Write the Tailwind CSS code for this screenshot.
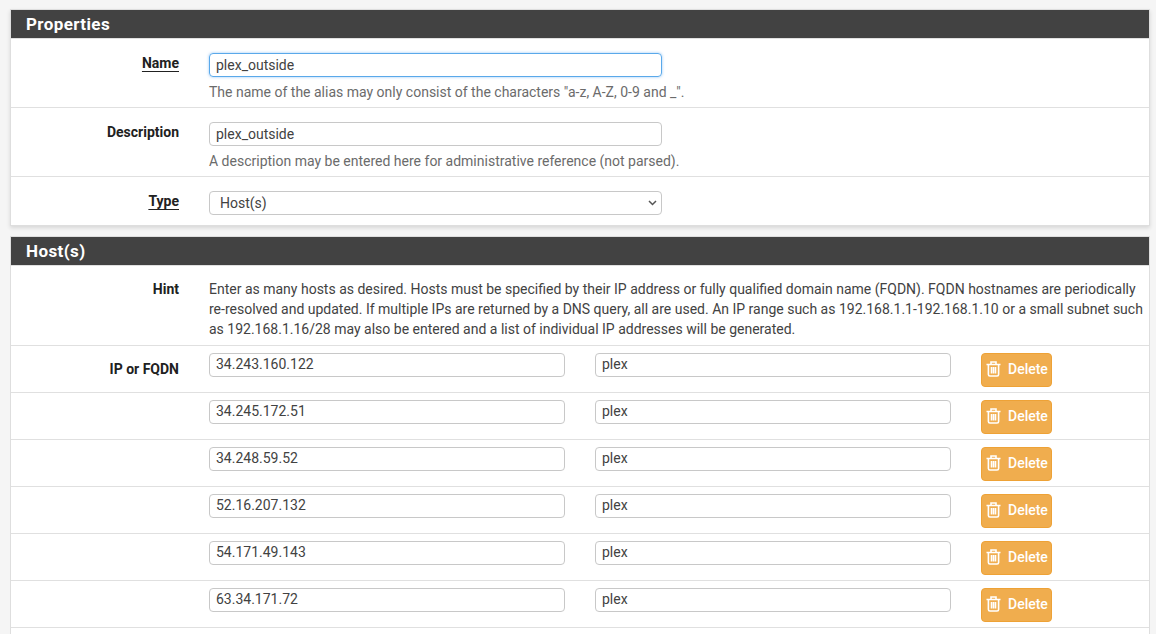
<!DOCTYPE html>
<html>
<head>
<meta charset="utf-8">
<script src="https://cdn.jsdelivr.net/npm/@tailwindcss/browser@4"></script>
</head>
<body class="bg-[#f5f5f5] font-['Roboto',sans-serif] text-[14px] text-[#424242] overflow-hidden">
<div class="h-[634px] overflow-hidden pt-[9px] pl-[10px] pr-[6px]">
  <section class="bg-white border border-[#dedede] shadow-[0_2px_4px_rgba(0,0,0,0.12)] mb-[10px]">
    <h2 class="h-[29px] bg-[#424242] border-b border-[#e0e0e0] text-white font-bold text-[17px] leading-[29px] pl-[15px] tracking-[0.4px]">Properties</h2>
    <div class="h-[69px] flex border-b border-[#e0e0e0] pt-[14px]">
      <div class="w-[168px] text-right font-bold text-[#212121] leading-[20px]"><span class="underline underline-offset-[3px]">Name</span></div>
      <div class="ml-[30px] w-[453px]">
        <input class="block w-full h-[24px] rounded-[4px] border border-[#5aa9ea] shadow-[0_0_3px_rgba(80,160,240,0.6)] px-[6px] text-[14px] text-[#424242] outline-none" value="plex_outside">
        <p class="mt-[5px] leading-[20px] text-[#6b6b6b] whitespace-nowrap">The name of the alias may only consist of the characters "a-z, A-Z, 0-9 and _".</p>
      </div>
    </div>
    <div class="h-[69px] flex border-b border-[#e0e0e0] pt-[14px]">
      <div class="w-[168px] text-right font-bold text-[#212121] leading-[20px]">Description</div>
      <div class="ml-[30px] w-[453px]">
        <input class="block w-full h-[24px] rounded-[4px] border border-[#c8c8c8] px-[6px] text-[14px] text-[#424242] outline-none" value="plex_outside">
        <p class="mt-[5px] leading-[20px] text-[#6b6b6b] whitespace-nowrap">A description may be entered here for administrative reference (not parsed).</p>
      </div>
    </div>
    <div class="h-[48px] flex pt-[14px]">
      <div class="w-[168px] text-right font-bold text-[#212121] leading-[20px]"><span class="underline underline-offset-[3px]">Type</span></div>
      <div class="ml-[30px] w-[453px] h-[24px] rounded-[4px] border border-[#c8c8c8] flex items-center justify-between pl-[10px] pr-[3px]">
        <span>Host(s)</span>
        <svg class="mr-[1px]" width="9" height="6" viewBox="0 0 9 6" fill="none" stroke="#555" stroke-width="1.5"><path d="M1 1 L4.5 4.5 L8 1"/></svg>
      </div>
    </div>
  </section>
  <section class="bg-white border border-[#dedede]">
    <h2 class="h-[29px] bg-[#424242] border-b border-[#e0e0e0] text-white font-bold text-[17px] leading-[28px] pl-[15px] tracking-[0.4px]">Host(s)</h2>
    <div class="h-[80px] flex border-b border-[#e0e0e0] pt-[11px]">
      <div class="w-[168px] text-right font-bold text-[#212121] leading-[24px]">Hint</div>
      <p class="ml-[30px] w-[936px] leading-[20px] pt-[2px] text-[#424242]">Enter as many hosts as desired. Hosts must be specified by their IP address or fully qualified domain name (FQDN). FQDN hostnames are periodically re-resolved and updated. If multiple IPs are returned by a DNS query, all are used. An IP range such as 192.168.1.1-192.168.1.10 or a small subnet such as 192.168.1.16/28 may also be entered and a list of individual IP addresses will be generated.</p>
    </div>

    <div class="h-[47px] flex border-b border-[#e0e0e0] pt-[7px]">
      <div class="w-[168px] text-right font-bold text-[#212121] leading-[20px] pt-[6px]">IP or FQDN</div>
      <input class="ml-[30px] w-[356px] h-[24px] rounded-[4px] border border-[#c8c8c8] px-[6px] pb-[2px] text-[14px] text-[#424242] outline-none" value="34.243.160.122">
      <input class="ml-[30px] w-[356px] h-[24px] rounded-[4px] border border-[#c8c8c8] px-[6px] pb-[2px] text-[14px] text-[#424242] outline-none" value="plex">
      <button class="ml-[30px] w-[71px] h-[34px] rounded-[4px] bg-[#f0ad4e] border border-[#eea236] text-white font-medium flex items-center pl-[4px] pb-[2px] gap-[7px]"><svg width="15" height="16" viewBox="0 0 15 16" fill="none" stroke="#fff" stroke-width="1.6"><path d="M0.5 3.5H14.5M5 3.2V1H10V3.2M2.4 3.5V13.5a1.5 1.5 0 0 0 1.5 1.5H11.1A1.5 1.5 0 0 0 12.6 13.5V3.5M5.5 6V12.6M7.5 6V12.6M9.5 6V12.6"/></svg>Delete</button>
    </div>
    <div class="h-[47px] flex border-b border-[#e0e0e0] pt-[7px]">
      <div class="w-[168px]"></div>
      <input class="ml-[30px] w-[356px] h-[24px] rounded-[4px] border border-[#c8c8c8] px-[6px] pb-[2px] text-[14px] text-[#424242] outline-none" value="34.245.172.51">
      <input class="ml-[30px] w-[356px] h-[24px] rounded-[4px] border border-[#c8c8c8] px-[6px] pb-[2px] text-[14px] text-[#424242] outline-none" value="plex">
      <button class="ml-[30px] w-[71px] h-[34px] rounded-[4px] bg-[#f0ad4e] border border-[#eea236] text-white font-medium flex items-center pl-[4px] pb-[2px] gap-[7px]"><svg width="15" height="16" viewBox="0 0 15 16" fill="none" stroke="#fff" stroke-width="1.6"><path d="M0.5 3.5H14.5M5 3.2V1H10V3.2M2.4 3.5V13.5a1.5 1.5 0 0 0 1.5 1.5H11.1A1.5 1.5 0 0 0 12.6 13.5V3.5M5.5 6V12.6M7.5 6V12.6M9.5 6V12.6"/></svg>Delete</button>
    </div>
    <div class="h-[47px] flex border-b border-[#e0e0e0] pt-[7px]">
      <div class="w-[168px]"></div>
      <input class="ml-[30px] w-[356px] h-[24px] rounded-[4px] border border-[#c8c8c8] px-[6px] pb-[2px] text-[14px] text-[#424242] outline-none" value="34.248.59.52">
      <input class="ml-[30px] w-[356px] h-[24px] rounded-[4px] border border-[#c8c8c8] px-[6px] pb-[2px] text-[14px] text-[#424242] outline-none" value="plex">
      <button class="ml-[30px] w-[71px] h-[34px] rounded-[4px] bg-[#f0ad4e] border border-[#eea236] text-white font-medium flex items-center pl-[4px] pb-[2px] gap-[7px]"><svg width="15" height="16" viewBox="0 0 15 16" fill="none" stroke="#fff" stroke-width="1.6"><path d="M0.5 3.5H14.5M5 3.2V1H10V3.2M2.4 3.5V13.5a1.5 1.5 0 0 0 1.5 1.5H11.1A1.5 1.5 0 0 0 12.6 13.5V3.5M5.5 6V12.6M7.5 6V12.6M9.5 6V12.6"/></svg>Delete</button>
    </div>
    <div class="h-[47px] flex border-b border-[#e0e0e0] pt-[7px]">
      <div class="w-[168px]"></div>
      <input class="ml-[30px] w-[356px] h-[24px] rounded-[4px] border border-[#c8c8c8] px-[6px] pb-[2px] text-[14px] text-[#424242] outline-none" value="52.16.207.132">
      <input class="ml-[30px] w-[356px] h-[24px] rounded-[4px] border border-[#c8c8c8] px-[6px] pb-[2px] text-[14px] text-[#424242] outline-none" value="plex">
      <button class="ml-[30px] w-[71px] h-[34px] rounded-[4px] bg-[#f0ad4e] border border-[#eea236] text-white font-medium flex items-center pl-[4px] pb-[2px] gap-[7px]"><svg width="15" height="16" viewBox="0 0 15 16" fill="none" stroke="#fff" stroke-width="1.6"><path d="M0.5 3.5H14.5M5 3.2V1H10V3.2M2.4 3.5V13.5a1.5 1.5 0 0 0 1.5 1.5H11.1A1.5 1.5 0 0 0 12.6 13.5V3.5M5.5 6V12.6M7.5 6V12.6M9.5 6V12.6"/></svg>Delete</button>
    </div>
    <div class="h-[47px] flex border-b border-[#e0e0e0] pt-[7px]">
      <div class="w-[168px]"></div>
      <input class="ml-[30px] w-[356px] h-[24px] rounded-[4px] border border-[#c8c8c8] px-[6px] pb-[2px] text-[14px] text-[#424242] outline-none" value="54.171.49.143">
      <input class="ml-[30px] w-[356px] h-[24px] rounded-[4px] border border-[#c8c8c8] px-[6px] pb-[2px] text-[14px] text-[#424242] outline-none" value="plex">
      <button class="ml-[30px] w-[71px] h-[34px] rounded-[4px] bg-[#f0ad4e] border border-[#eea236] text-white font-medium flex items-center pl-[4px] pb-[2px] gap-[7px]"><svg width="15" height="16" viewBox="0 0 15 16" fill="none" stroke="#fff" stroke-width="1.6"><path d="M0.5 3.5H14.5M5 3.2V1H10V3.2M2.4 3.5V13.5a1.5 1.5 0 0 0 1.5 1.5H11.1A1.5 1.5 0 0 0 12.6 13.5V3.5M5.5 6V12.6M7.5 6V12.6M9.5 6V12.6"/></svg>Delete</button>
    </div>
    <div class="h-[47px] flex border-b border-[#e0e0e0] pt-[7px]">
      <div class="w-[168px]"></div>
      <input class="ml-[30px] w-[356px] h-[24px] rounded-[4px] border border-[#c8c8c8] px-[6px] pb-[2px] text-[14px] text-[#424242] outline-none" value="63.34.171.72">
      <input class="ml-[30px] w-[356px] h-[24px] rounded-[4px] border border-[#c8c8c8] px-[6px] pb-[2px] text-[14px] text-[#424242] outline-none" value="plex">
      <button class="ml-[30px] w-[71px] h-[34px] rounded-[4px] bg-[#f0ad4e] border border-[#eea236] text-white font-medium flex items-center pl-[4px] pb-[2px] gap-[7px]"><svg width="15" height="16" viewBox="0 0 15 16" fill="none" stroke="#fff" stroke-width="1.6"><path d="M0.5 3.5H14.5M5 3.2V1H10V3.2M2.4 3.5V13.5a1.5 1.5 0 0 0 1.5 1.5H11.1A1.5 1.5 0 0 0 12.6 13.5V3.5M5.5 6V12.6M7.5 6V12.6M9.5 6V12.6"/></svg>Delete</button>
    </div>
    <div class="h-[40px]"></div>
  </section>
</div>
</body>
</html>
